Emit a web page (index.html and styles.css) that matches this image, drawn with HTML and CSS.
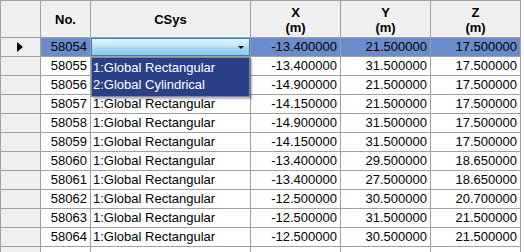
FILE: index.html
```html
<!DOCTYPE html>
<html>
<head>
<meta charset="utf-8">
<link rel="stylesheet" href="styles.css">
</head>
<body>
<div class="wrap">
<table class="grid">
  <colgroup>
    <col class="c-rh"><col class="c-no"><col class="c-sys"><col class="c-num"><col class="c-num"><col class="c-num">
  </colgroup>
  <thead>
    <tr>
      <th class="rh"></th>
      <th>No.</th>
      <th>CSys</th>
      <th>X<br>(m)</th>
      <th>Y<br>(m)</th>
      <th>Z<br>(m)</th>
    </tr>
  </thead>
  <tbody>
    <tr class="sel">
      <td class="rh"><span class="tri"></span></td>
      <td class="num hl">58054</td>
      <td class="combo-cell">
        <div class="combo"><span class="arrow"></span></div>
        <div class="list">
          <div class="item">1:Global Rectangular</div>
          <div class="item">2:Global Cylindrical</div>
        </div>
      </td>
      <td class="num hl">-13.400000</td>
      <td class="num hl">21.500000</td>
      <td class="num hl">17.500000</td>
    </tr>
    <tr><td class="rh"></td><td class="num">58055</td><td class="txt"></td><td class="num">-13.400000</td><td class="num">31.500000</td><td class="num">17.500000</td></tr>
    <tr><td class="rh"></td><td class="num">58056</td><td class="txt"></td><td class="num">-14.900000</td><td class="num">21.500000</td><td class="num">17.500000</td></tr>
    <tr><td class="rh"></td><td class="num">58057</td><td class="txt">1:Global Rectangular</td><td class="num">-14.150000</td><td class="num">21.500000</td><td class="num">17.500000</td></tr>
    <tr><td class="rh"></td><td class="num">58058</td><td class="txt">1:Global Rectangular</td><td class="num">-14.900000</td><td class="num">31.500000</td><td class="num">17.500000</td></tr>
    <tr><td class="rh"></td><td class="num">58059</td><td class="txt">1:Global Rectangular</td><td class="num">-14.150000</td><td class="num">31.500000</td><td class="num">17.500000</td></tr>
    <tr><td class="rh"></td><td class="num">58060</td><td class="txt">1:Global Rectangular</td><td class="num">-13.400000</td><td class="num">29.500000</td><td class="num">18.650000</td></tr>
    <tr><td class="rh"></td><td class="num">58061</td><td class="txt">1:Global Rectangular</td><td class="num">-13.400000</td><td class="num">27.500000</td><td class="num">18.650000</td></tr>
    <tr><td class="rh"></td><td class="num">58062</td><td class="txt">1:Global Rectangular</td><td class="num">-12.500000</td><td class="num">30.500000</td><td class="num">20.700000</td></tr>
    <tr><td class="rh"></td><td class="num">58063</td><td class="txt">1:Global Rectangular</td><td class="num">-12.500000</td><td class="num">31.500000</td><td class="num">21.500000</td></tr>
    <tr><td class="rh"></td><td class="num">58064</td><td class="txt">1:Global Rectangular</td><td class="num">-12.500000</td><td class="num">30.500000</td><td class="num">21.500000</td></tr>
    <tr><td class="rh"></td><td class="num"></td><td class="txt"></td><td class="num"></td><td class="num"></td><td class="num"></td></tr>
  </tbody>
</table>
</div>
</body>
</html>
```
FILE: styles.css
```css
html, body {
  margin: 0;
  padding: 0;
  background: #ffffff;
}
.wrap {
  width: 524px;
  height: 252px;
  overflow: hidden;
}
.grid {
  border-collapse: collapse;
  table-layout: fixed;
  font-family: "Liberation Sans", Arial, sans-serif;
  font-size: 13px;
  color: #000000;
}
.c-rh { width: 40px; }
.c-no { width: 50px; }
.c-sys { width: 160px; }
.c-num { width: 90px; }
.grid th, .grid td {
  border: 1px solid #a0a0a0;
  padding: 0;
  overflow: visible;
  white-space: nowrap;
}
.grid th {
  height: 35px;
  background: #f0f0f0;
  font-weight: bold;
  text-align: center;
  vertical-align: middle;
  line-height: 15px;
  padding-top: 1px;
}
.grid td {
  height: 18px;
  line-height: 18px;
}
.grid td.rh {
  background: #f0f0f0;
  position: relative;
}
.tri {
  display: block;
  width: 0;
  height: 0;
  margin-left: 16px;
  border-top: 5px solid transparent;
  border-bottom: 5px solid transparent;
  border-left: 6px solid #000000;
}
.num {
  text-align: right;
  padding-right: 3px !important;
}
.txt {
  text-align: left;
  padding-left: 2px !important;
}
.hl {
  background: #6b8ccc;
}
.combo-cell {
  position: relative;
  background: #ffffff;
}
.combo {
  position: absolute;
  left: 0;
  top: 0;
  right: 0;
  bottom: 0;
  border: 1px solid #3c7fb1;
  background: linear-gradient(#e6f4fc 0%, #bfe3f8 45%, #a7d8f4 55%, #8acbf0 100%);
}
.arrow {
  position: absolute;
  right: 5px;
  top: 7px;
  width: 0;
  height: 0;
  border-left: 3px solid transparent;
  border-right: 3px solid transparent;
  border-top: 3px solid #000000;
}
.list {
  position: absolute;
  left: 0;
  top: 19px;
  width: 157px;
  height: 37px;
  background: #2b3f87;
  border: 1px solid #7a8aa8;
  box-shadow: 2px 2px 2px rgba(0,0,0,0.3);
  z-index: 2;
  padding-top: 1px;
}
.item {
  color: #ffffff;
  height: 17px;
  line-height: 17px;
  padding-left: 1px;
}
```
